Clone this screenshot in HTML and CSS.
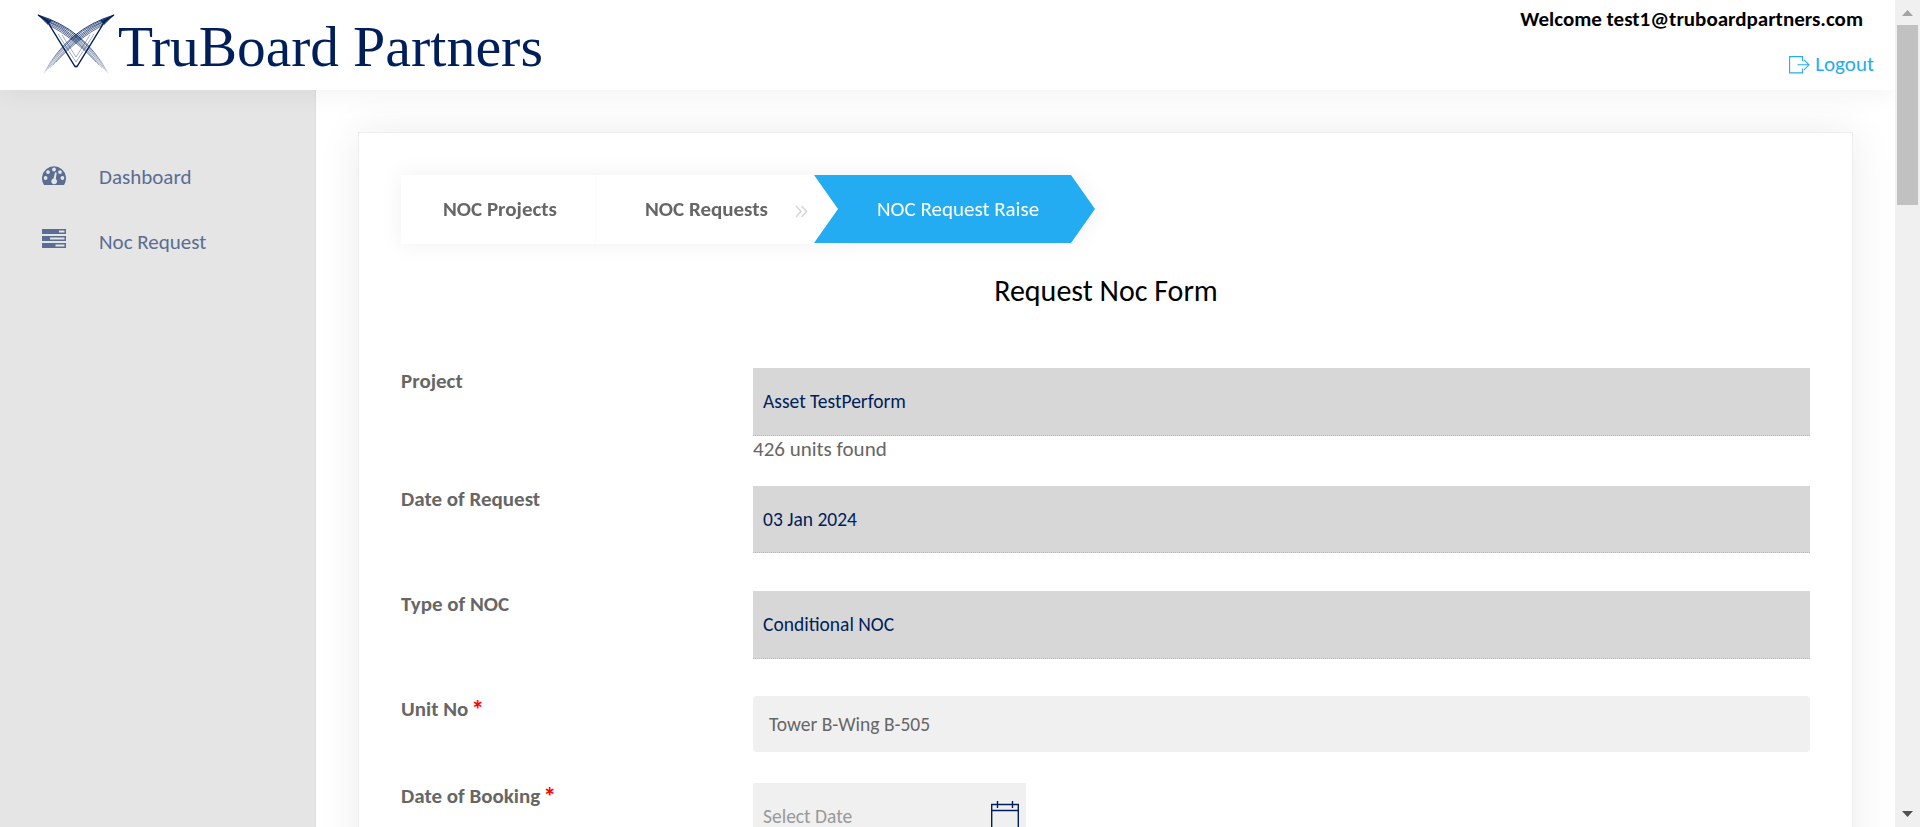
FILE: index.html
```html
<!DOCTYPE html>
<html lang="en">
<head>
<meta charset="utf-8">
<title>TruBoard Partners</title>
<link rel="stylesheet" href="styles.css">
</head>
<body>
<div class="window">
  <div class="page">
    <header class="header">
      <a class="logo">
        <svg width="560" height="90" viewBox="0 0 560 90">
          <defs>
            <linearGradient id="fade" gradientUnits="userSpaceOnUse" x1="0" y1="40" x2="0" y2="74">
              <stop offset="0" stop-color="#001e5a"/><stop offset="1" stop-color="#001e5a" stop-opacity=".15"/>
            </linearGradient>
          </defs>
          <g fill="none" stroke="url(#fade)">
            <g id="wing">
              <path d="M38 15Q84 29 108 73" stroke-width="1" opacity=".9"/>
              <path d="M41 17Q82 31 106 71" stroke-width=".9" opacity=".8"/>
              <path d="M43 18.500Q80 33 104 69" stroke-width=".9" opacity=".8"/>
              <path d="M45 20Q78 35 102 68" stroke-width=".9" opacity=".8"/>
              <path d="M47 22.500Q76 36.500 99 65" stroke-width=".9" opacity=".75"/>
              <path d="M49 25Q74 38 96 62" stroke-width=".9" opacity=".7"/>
              <path d="M38 15L47 21L75 66.500H76.500" stroke="#001e5a" stroke-width="1.4"/>
              <path d="M58 34L76 62M62 35L76 57" stroke="#001e5a" stroke-width=".8" opacity=".45"/>
            </g>
            <use href="#wing" transform="matrix(-1 0 0 1 152 0)"/>
          </g>
          <path d="M38 15L52 20.500L48 25ZM114 15L100 20.500L104 25Z" fill="#001e5a" opacity=".8"/>
          <text class="wordmark" y="66"><tspan x="118" textLength="221" lengthAdjust="spacingAndGlyphs">TruBoard</tspan> <tspan x="353" textLength="190" lengthAdjust="spacingAndGlyphs">Partners</tspan></text>
        </svg>
      </a>
      <div class="account">
        <div class="welcome">Welcome test1@truboardpartners.com</div>
        <a class="logout">
          <svg width="21" height="18" viewBox="0 0 21 18" fill="none" stroke="#23acf1" stroke-width="1.1"><path d="M13.5 5V.6H.6v16.3h12.9V12.5M8.5 8.8H20M15 3.8l5 5-5 5"/></svg>
          <span class="logout-text">Logout</span>
        </a>
      </div>
    </header>
    <div class="body">
      <nav class="sidebar">
        <a class="nav-item">
          <svg width="24" height="19" viewBox="0 0 24 19"><path d="M2 19A12 12 0 1 1 22 19Z" fill="#5b6d93"/><g fill="#e5e5e5"><circle cx="3.6" cy="12" r="1.9"/><circle cx="6" cy="6.1" r="1.9"/><circle cx="12" cy="3.5" r="1.9"/><circle cx="18" cy="6.1" r="1.9"/><circle cx="20.4" cy="12" r="1.9"/><path d="M13.1 6.3l1.6.4-.9 6.200a2.900 2.900 0 1 1-2.300-.4Z"/></g></svg>
          <span>Dashboard</span>
        </a>
        <a class="nav-item">
          <svg width="24" height="19" viewBox="0 0 24 19"><path d="M0 0h24v5H0zM0 7h24v5H0zM0 14h24v5H0z" fill="#5b6d93"/><path d="M17 1.5h5.5v2H17zM8 8.500h14.500v2H8zM13.500 15.500h9v2h-9z" fill="#e5e5e5"/></svg>
          <span>Noc Request</span>
        </a>
      </nav>
      <main class="main">
        <section class="card">
          <div class="steps">
            <a class="step step-projects"><span>NOC Projects</span></a>
            <a class="step step-requests"><span>NOC Requests</span><svg width="13" height="13" viewBox="0 0 13 13" fill="none" stroke="#d6d6d6" stroke-width="1.5"><path d="M1 1l5 5.5L1 12M6.500 1l5 5.500-5 5.500"/></svg></a>
            <a class="step step-active"><span>NOC Request Raise</span></a>
          </div>
          <h1 class="title">Request Noc Form</h1>
          <form class="form">
            <div class="row row-project"><label>Project</label><div><div class="readonly">Asset TestPerform</div><p class="hint">426 units found</p></div></div>
            <div class="row row-request"><label>Date of Request</label><div class="readonly short">03 Jan 2024</div></div>
            <div class="row row-type"><label>Type of NOC</label><div class="readonly">Conditional NOC</div></div>
            <div class="row row-unit"><label>Unit No<b>*</b></label><div class="select">Tower B-Wing B-505</div></div>
            <div class="row"><label>Date of Booking<b>*</b></label><div class="date"><span>Select Date</span><svg width="28" height="30" viewBox="0 0 28 30" fill="none" stroke="#001e5a" stroke-width="1.4"><path d="M.7 3.5h26.6V29H.7zM.7 9.500h26.600M6.500 0v7M21.500 0v7"/></svg></div></div>
          </form>
        </section>
      </main>
    </div>
  </div>
  <div class="scrollbar">
    <svg width="11" height="6" viewBox="0 0 11 6"><path d="M0 6L5.500 0L11 6Z" fill="#a3a3a3"/></svg>
    <div class="thumb"></div>
    <svg class="down" width="11" height="6" viewBox="0 0 11 6"><path d="M0 0H11L5.500 6Z" fill="#505050"/></svg>
  </div>
</div>
</body>
</html>
```
FILE: styles.css
```css
* { box-sizing: border-box; }
body { margin: 0; overflow: hidden; font-family: Calibri, Carlito, Lato, sans-serif; font-size: 21px; line-height: 24px; color: #666; background: #fff; }
.window { display: flex; width: 1920px; height: 827px; overflow: hidden; }
.page { width: 1895px; height: 827px; display: flex; flex-direction: column; overflow: hidden; }
.header { position: relative; z-index: 2; display: flex; justify-content: space-between; flex: 0 0 90px; background: #fff; box-shadow: 0 0 30px rgba(0,0,0,.07); }
.logo svg { display: block; }
.wordmark { font-family: "Liberation Serif", serif; font-size: 56px; fill: #001e5a; }
.account { display: flex; flex-direction: column; align-items: flex-end; padding: 7px 21px 0 0; }
.welcome { margin-right: 11px; color: #000; font-weight: 700; }
.logout { display: flex; align-items: center; gap: 5px; margin-top: 21px; color: #23acf1; }
.logout svg { margin-top: 2px; }
.body { display: flex; flex: 1; min-height: 0; }
.sidebar { width: 316px; background: #e5e5e5; border-right: 1px solid #ddd; padding: 75px 0 0 42px; color: #5b6d93; }
.nav-item { display: flex; gap: 33px; height: 65px; }
.nav-item svg { margin-top: 1px; }
.nav-item + .nav-item svg { margin-top: -1px; }
.main { flex: 1; padding: 42px 42px 0 42px; }
.card { height: 760px; background: #fff; border: 1px solid #eee; box-shadow: 0 0 40px rgba(0,0,0,.08); padding: 42px 41px 0 42px; }
.steps { display: flex; height: 69px; width: 695px; filter: drop-shadow(0 0 10px rgba(0,0,0,.06)); }
.step { display: flex; align-items: center; background: #fff; font-weight: 700; }
.step-projects { width: 195px; padding: 0 0 2px 42px; border-right: 1px solid #fafafa; }
.step-requests { width: 242px; margin-right: -24px; padding: 0 30px 2px 49px; justify-content: space-between; }
.step-requests svg { margin-top: 6px; }
.step-active { width: 281px; height: 68px; padding-left: 63px; background: #23acf1; color: #fff; font-weight: 400; clip-path: polygon(0 0, 257px 0, 100% 50%, 257px 100%, 0 100%, 24px 50%); }
.title { margin: 29px 0 0; height: 36px; line-height: 36px; text-align: center; color: #000; font-size: 30px; font-weight: 400; }
.form { padding-top: 59px; }
.row { display: grid; grid-template-columns: 352px 1057px; }
.row-project { height: 118px; }
.row-request, .row-type { height: 105px; }
.row-unit { height: 87px; }
label { padding-top: 1px; font-weight: 700; }
label b { color: #f00; margin-left: 3px; font-size: 26px; line-height: 0; vertical-align: -3px; }
.readonly { height: 68px; background: #d7d7d7; border-bottom: 1px dotted #b8b8b8; padding: 21px 10px; color: #001e5a; font-size: 19.5px; }
.short { height: 67px; }
.hint { margin: 1px 0 0; }
.select { height: 56px; background: #f0f0f0; border-radius: 4px; padding: 16px 16px; font-size: 19.5px; }
.date { display: flex; justify-content: space-between; width: 273px; height: 68px; background: #f0f0f0; padding: 21px 7px 0 10px; color: #999; font-size: 19.5px; }
.date svg { margin-top: -3px; }
.scrollbar { display: flex; flex-direction: column; align-items: center; width: 25px; height: 827px; background: #f0f0f0; padding: 10px 0; }
.thumb { width: 21px; height: 180px; margin-top: 9px; background: #c1c1c1; }
.down { margin-top: auto; }
```
